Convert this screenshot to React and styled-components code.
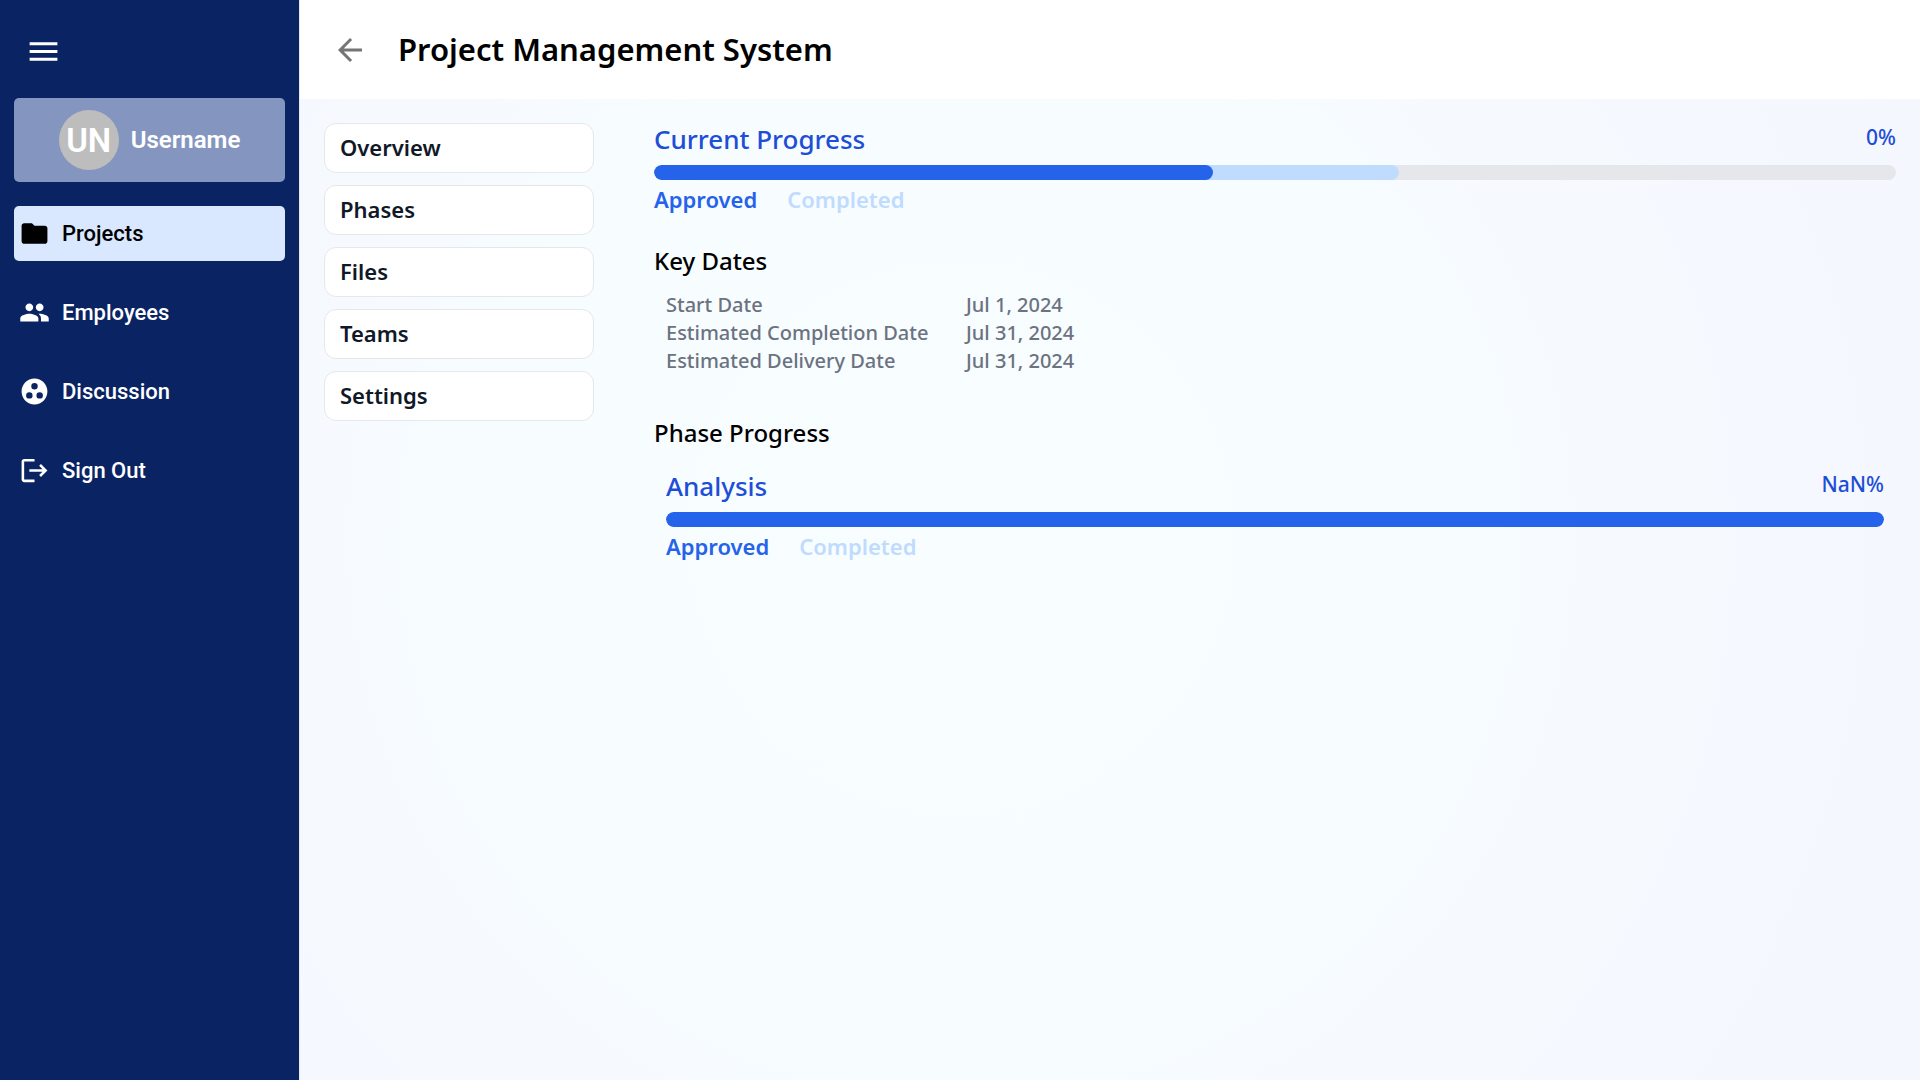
import React from "react";
import styled, { createGlobalStyle } from "styled-components";
import {
  MdMenu,
  MdFolder,
  MdPeople,
  MdGroupWork,
  MdLogout,
  MdArrowBack,
} from "react-icons/md";

const GlobalStyle = createGlobalStyle`
  *, *::before, *::after { box-sizing: border-box; }
  body {
    margin: 0;
    font-family: "Noto Sans", "Open Sans", sans-serif;
    color: #000;
  }
  h1, h2, h3, p, ul, dl, dd { margin: 0; padding: 0; }
  ul { list-style: none; }
  a { color: inherit; text-decoration: none; }
  button { font: inherit; color: inherit; border: 0; background: none; padding: 0; cursor: pointer; }
`;

const Page = styled.div`
  display: flex;
  min-height: 100vh;
  background: radial-gradient(circle at center, #f8fdff 0%, #f7fcff 45%, #f5f8fe 75%, #f5f7ff 100%);
`;

const Sidebar = styled.aside`
  flex: 0 0 300px;
  padding: 33px 14px;
  border-right: 1px solid #e5e7eb;
  background: #0a2463;
  color: #fff;
  font-family: Roboto, sans-serif;
`;

const MenuButton = styled.button`
  display: flex;
  margin: 0 0 28px 11px;
`;

const UserCard = styled.button`
  display: flex;
  align-items: center;
  justify-content: center;
  gap: 12px;
  width: 100%;
  padding: 12px;
  border-radius: 5px;
  background: #8496bf;
  font-size: 24px;
  font-weight: 600;
`;

const Avatar = styled.span`
  display: grid;
  place-items: center;
  width: 60px;
  height: 60px;
  border-radius: 50%;
  background: #bdbdbd;
  font-size: 33px;
`;

const NavList = styled.ul`
  display: flex;
  flex-direction: column;
  gap: 24px;
  margin-top: 24px;
`;

const NavLink = styled.a`
  display: flex;
  align-items: center;
  gap: 12px;
  padding: 12px 5px;
  border-radius: 5px;
  font-size: 22px;
  line-height: 31px;
  font-weight: 500;
  background: ${(p) => (p.$active ? "#d9e7ff" : "transparent")};
  color: ${(p) => (p.$active ? "#000" : "#fff")};
`;

const Main = styled.main`
  flex: 1;
  min-width: 0;
`;

const Header = styled.header`
  display: flex;
  align-items: center;
  gap: 30px;
  padding: 28px 32px 27px;
  background: #fff;
`;

const BackLink = styled.a`
  display: flex;
  color: #757575;
`;

const Title = styled.h1`
  padding-bottom: 2px;
  font-size: 31px;
  line-height: 42px;
  font-weight: 600;
`;

const Body = styled.div`
  display: flex;
  gap: 60px;
  padding: 24px;
`;

const Tabs = styled.nav`
  display: flex;
  flex-direction: column;
  gap: 12px;
  flex: 0 0 270px;
`;

const Tab = styled.a`
  padding: 9px 15px 11px;
  border: 1px solid #e5e7eb;
  border-radius: 12px;
  background: #fff;
  color: #111827;
  font-size: 22px;
  line-height: 28px;
  font-weight: 600;
`;

const Content = styled.div`
  flex: 1;
  min-width: 0;
`;

const ProgressHead = styled.div`
  display: flex;
  justify-content: space-between;
  align-items: flex-start;
  margin-bottom: 9px;
  color: #1d4ed8;
`;

const ProgressTitle = styled.h2`
  font-size: 26px;
  line-height: 33px;
  font-weight: 500;
`;

const Percent = styled.span`
  font-size: 21px;
  line-height: 28px;
  font-weight: 500;
`;

const Track = styled.div`
  display: grid;
  height: 15px;
  border-radius: 8px;
  background: #e5e7eb;
  overflow: hidden;
`;

const Fill = styled.div`
  grid-area: 1 / 1;
  border-radius: 8px;
  background: ${(p) => p.$color};
`;

const Legend = styled.div`
  display: flex;
  gap: 30px;
  margin-top: 5px;
  font-size: 22px;
  line-height: 28px;
  font-weight: 600;
`;

const LegendItem = styled.span`
  color: ${(p) => p.$color};
`;

const Section = styled.section`
  margin-top: ${(p) => p.$space}px;
`;

const SectionTitle = styled.h2`
  font-size: 24px;
  line-height: 32px;
  font-weight: 500;
`;

const Dates = styled.dl`
  display: grid;
  grid-template-columns: 300px 1fr;
  padding: 14px 12px 0;
  color: #6b7280;
  font-size: 20px;
  line-height: 28px;
  font-weight: 500;
`;

const Phases = styled.div`
  padding: 21px 12px 0;
`;

const APPROVED = "#2563eb";
const COMPLETED = "#bfdbfe";

function Progress({ title, percent, approved, completed }) {
  return (
    <div>
      <ProgressHead>
        <ProgressTitle>{title}</ProgressTitle>
        <Percent>{percent}</Percent>
      </ProgressHead>
      <Track>
        <Fill $color={COMPLETED} style={{ width: `${completed}%` }} />
        <Fill $color={APPROVED} style={{ width: `${approved}%` }} />
      </Track>
      <Legend>
        <LegendItem $color={APPROVED}>Approved</LegendItem>
        <LegendItem $color={COMPLETED}>Completed</LegendItem>
      </Legend>
    </div>
  );
}

const NAV = [
  { label: "Projects", Icon: MdFolder, active: true },
  { label: "Employees", Icon: MdPeople },
  { label: "Discussion", Icon: MdGroupWork },
  { label: "Sign Out", Icon: MdLogout },
];

const TABS = ["Overview", "Phases", "Files", "Teams", "Settings"];

const DATES = [
  ["Start Date", "Jul 1, 2024"],
  ["Estimated Completion Date", "Jul 31, 2024"],
  ["Estimated Delivery Date", "Jul 31, 2024"],
];

export default function App() {
  return (
    <>
      <GlobalStyle />
      <Page>
        <Sidebar>
          <MenuButton type="button" aria-label="Menu">
            <MdMenu size={37} />
          </MenuButton>
          <UserCard type="button">
            <Avatar>UN</Avatar>
            Username
          </UserCard>
          <nav>
            <NavList>
              {NAV.map(({ label, Icon, active }) => (
                <li key={label}>
                  <NavLink href="#" $active={active}>
                    <Icon size={31} />
                    {label}
                  </NavLink>
                </li>
              ))}
            </NavList>
          </nav>
        </Sidebar>
        <Main>
          <Header>
            <BackLink href="#" aria-label="Back">
              <MdArrowBack size={36} />
            </BackLink>
            <Title>Project Management System</Title>
          </Header>
          <Body>
            <Tabs>
              {TABS.map((t) => (
                <Tab key={t} href="#">
                  {t}
                </Tab>
              ))}
            </Tabs>
            <Content>
              <Progress title="Current Progress" percent="0%" approved={45} completed={60} />
              <Section $space={32}>
                <SectionTitle>Key Dates</SectionTitle>
                <Dates>
                  {DATES.map(([label, value]) => (
                    <React.Fragment key={label}>
                      <dt>{label}</dt>
                      <dd>{value}</dd>
                    </React.Fragment>
                  ))}
                </Dates>
              </Section>
              <Section $space={42}>
                <SectionTitle>Phase Progress</SectionTitle>
                <Phases>
                  <Progress title="Analysis" percent="NaN%" approved={100} completed={100} />
                </Phases>
              </Section>
            </Content>
          </Body>
        </Main>
      </Page>
    </>
  );
}
